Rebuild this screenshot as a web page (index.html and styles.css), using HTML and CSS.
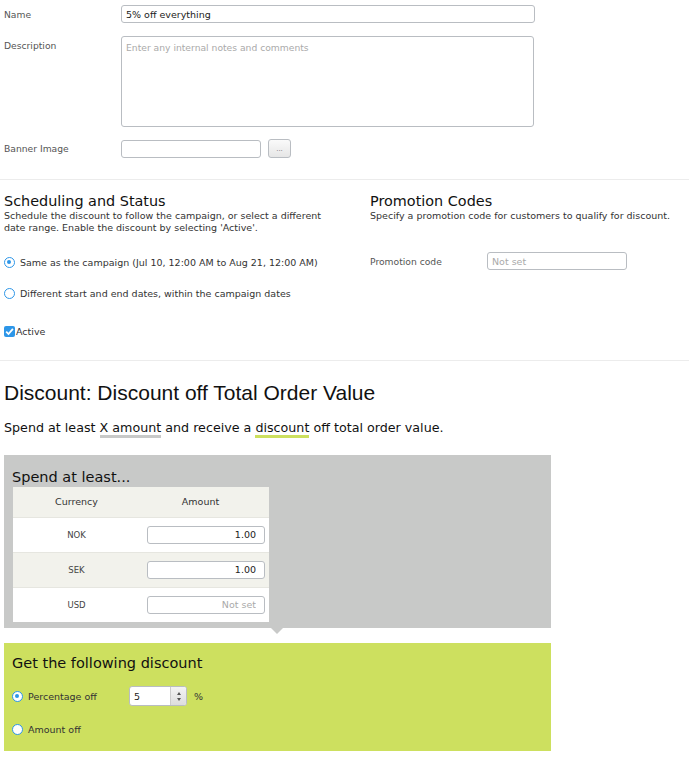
FILE: index.html
```html
<!DOCTYPE html>
<html>
<head>
<meta charset="utf-8">
<link rel="stylesheet" href="styles.css">
</head>
<body>
<div class="general">
  <div class="row row-name">
    <label class="lbl">Name</label>
    <input class="txt name-input" type="text" value="5% off everything">
  </div>
  <div class="row row-top">
    <label class="lbl">Description</label>
    <textarea class="txt desc" placeholder="Enter any internal notes and comments"></textarea>
  </div>
  <div class="row row-last">
    <label class="lbl">Banner Image</label>
    <input class="txt banner" type="text">
    <button class="browse">...</button>
  </div>
</div>
<div class="sep"></div>
<div class="two-col">
  <div class="col-left">
    <h2 class="sec-title">Scheduling and Status</h2>
    <p class="sec-desc narrow">Schedule the discount to follow the campaign, or select a different date range. Enable the discount by selecting 'Active'.</p>
    <div class="opt opt-first"><span class="radio checked"></span><span>Same as the campaign (Jul 10, 12:00 AM to Aug 21, 12:00 AM)</span></div>
    <div class="opt"><span class="radio"></span><span>Different start and end dates, within the campaign dates</span></div>
    <div class="check-row"><span class="checkbox"><svg width="11" height="11" viewBox="0 0 11 11"><path d="M2.2 5.6 L4.5 8 L8.9 2.8" fill="none" stroke="#fff" stroke-width="1.8"/></svg></span><span>Active</span></div>
  </div>
  <div class="col-right">
    <h2 class="sec-title">Promotion Codes</h2>
    <p class="sec-desc">Specify a promotion code for customers to qualify for discount.</p>
    <div class="promo-row">
      <label class="lbl promo-lbl">Promotion code</label>
      <input class="txt promo" type="text" placeholder="Not set">
    </div>
  </div>
</div>
<div class="sep sep2"></div>
<div class="discount">
  <h1 class="disc-title">Discount: Discount off Total Order Value</h1>
  <p class="disc-sub">Spend at least <span class="ul-gray">X amount</span> and receive a <span class="ul-green">discount</span> off total order value.</p>
  <div class="box-gray">
    <h3 class="box-title">Spend at least...</h3>
    <table class="cur-table">
      <thead><tr><th class="c1">Currency</th><th class="c2">Amount</th></tr></thead>
      <tbody>
        <tr><td class="c1">NOK</td><td class="c2"><input class="txt amt" type="text" value="1.00"></td></tr>
        <tr class="alt"><td class="c1">SEK</td><td class="c2"><input class="txt amt" type="text" value="1.00"></td></tr>
        <tr><td class="c1">USD</td><td class="c2"><input class="txt amt" type="text" placeholder="Not set"></td></tr>
      </tbody>
    </table>
  </div>
  <div class="box-green">
    <h3 class="box-title">Get the following discount</h3>
    <div class="g-opt g-first">
      <span class="radio checked"></span><span class="g-lbl">Percentage off</span>
      <span class="spin"><span class="spin-val">5</span><span class="spin-btns"><span class="up"></span><span class="down"></span></span></span>
      <span class="pct">%</span>
    </div>
    <div class="g-opt"><span class="radio"></span><span class="g-lbl">Amount off</span></div>
  </div>
</div>
</body>
</html>
```

FILE: styles.css
```css
* { box-sizing: border-box; }
body {
  margin: 0;
  font-family: "DejaVu Sans", Verdana, sans-serif;
  font-size: 9.5px;
  color: #333;
  background: #fff;
  width: 689px;
}
.general { padding: 5px 4px 0 4px; }
.row { display: flex; align-items: center; margin-bottom: 12px; }
.row-name { margin-bottom: 13px; }
.row-top { align-items: flex-start; margin-bottom: 12px; }
.row-top .lbl { padding-top: 4px; }
.row-last { margin-bottom: 0; }
.lbl { width: 117px; color: #555; font-size: 9.2px; flex: none; }
.txt {
  font-family: "DejaVu Sans", Verdana, sans-serif;
  font-size: 9.5px;
  border: 1px solid #b9bdc2;
  border-radius: 3px;
  background: #fff;
  color: #222;
  padding: 0 4px;
  height: 18px;
  outline: none;
}
.txt::placeholder { color: #aaa; }
.name-input { width: 414px; }
.desc { width: 413px; height: 91px; resize: none; padding: 5px 4px; margin: 0; display: block; font-size: 9.2px; }
.banner { width: 140px; }
.browse {
  margin-left: 7px;
  width: 23px; height: 19px;
  border: 1px solid #b9bdc2;
  border-radius: 3px;
  background: linear-gradient(#fafafa, #e6e6e6);
  color: #777;
  font-size: 8px;
  padding: 0;
  line-height: 1;
}
.sep { height: 1px; background: #ececec; margin-top: 21px; }
.two-col { display: flex; padding: 0 4px; height: 180px; }
.col-left { width: 366px; }
.col-right { flex: 1; }
.sec-title { font-weight: normal; font-size: 14.4px; color: #111; margin: 13px 0 1px 0; }
.sec-desc { margin: 0; font-size: 9.5px; line-height: 12px; color: #333; }
.narrow { width: 330px; }
.opt { display: flex; align-items: center; margin-top: 20px; }
.opt-first { margin-top: 23px; }
.radio {
  width: 11px; height: 11px; border-radius: 50%;
  border: 1.5px solid #2d96e8; background: #fff;
  margin-right: 5px; flex: none; position: relative;
}
.radio.checked::after {
  content: ""; position: absolute; left: 2px; top: 2px;
  width: 4px; height: 4px; border-radius: 50%; background: #2d96e8;
}
.check-row { display: flex; align-items: center; margin-top: 27px; }
.checkbox {
  width: 11px; height: 11px; background: #2d96e8; border-radius: 2px;
  display: inline-flex; flex: none; margin-right: 1px;
}
.promo-row { display: flex; align-items: center; margin-top: 30px; }
.promo-lbl { width: 117px; }
.promo { width: 140px; }
.sep2 { margin-top: 0; }
.discount { padding: 0 4px; }
.disc-title {
  font-family: "Liberation Sans", Arial, sans-serif;
  font-weight: normal; font-size: 21px; color: #111;
  margin: 20px 0 0 0;
}
.disc-sub { font-size: 12.7px; color: #111; margin: 15px 0 0 0; }
.ul-gray { border-bottom: 3px solid #c8c9c8; }
.ul-green { border-bottom: 3px solid #cde05f; }
.box-gray {
  background: #c8c9c8; width: 547px; margin-top: 20px;
  padding: 14px 8px 6px 8px; position: relative;
}
.box-gray::after {
  content: ""; position: absolute; left: 267px; bottom: -6px;
  border-left: 6px solid transparent; border-right: 6px solid transparent;
  border-top: 6px solid #c8c9c8;
}
.box-title { font-weight: normal; font-size: 14.5px; color: #111; margin: 0 0 2px 0; }
.cur-table { border-collapse: collapse; background: #fff; width: 256px; margin-left: 1px; }
.cur-table th { background: #f2f2ec; font-weight: normal; font-size: 9.5px; color: #333; height: 30px; }
.cur-table td { height: 35px; font-size: 8.5px; color: #444; border-top: 1px solid #e6e6e0; }
.cur-table tr.alt td { background: #f2f2ec; }
.c1 { width: 127px; text-align: center; }
.c2 { text-align: left; padding-left: 7px; }
th.c2 { text-align: center; padding-left: 0; padding-right: 8px; }
.amt { width: 118px; text-align: right; padding-right: 8px; }
.amt::placeholder { color: #aaa; }
.box-green {
  background: #cde05f; width: 547px; margin-top: 15px;
  padding: 12px 8px 16px 8px;
}
.g-opt { display: flex; align-items: center; margin-top: 18px; color: #333; }
.g-first { margin-top: 15px; }
.g-lbl { width: 101px; }
.spin {
  display: inline-flex; width: 58px; height: 20px;
  border: 1px solid #b9bdc2; border-radius: 3px; background: #fff;
}
.spin-val { flex: 1; padding-left: 4px; display: flex; align-items: center; color: #222; }
.spin-btns {
  width: 16px; border-left: 1px solid #ccc; background: linear-gradient(#f4f4f4, #ddd);
  display: flex; flex-direction: column; align-items: center; justify-content: center; gap: 3px;
  border-radius: 0 2px 2px 0;
}
.up { border-left: 2.5px solid transparent; border-right: 2.5px solid transparent; border-bottom: 3px solid #555; }
.down { border-left: 2.5px solid transparent; border-right: 2.5px solid transparent; border-top: 3px solid #555; }
.pct { margin-left: 7px; }
```
